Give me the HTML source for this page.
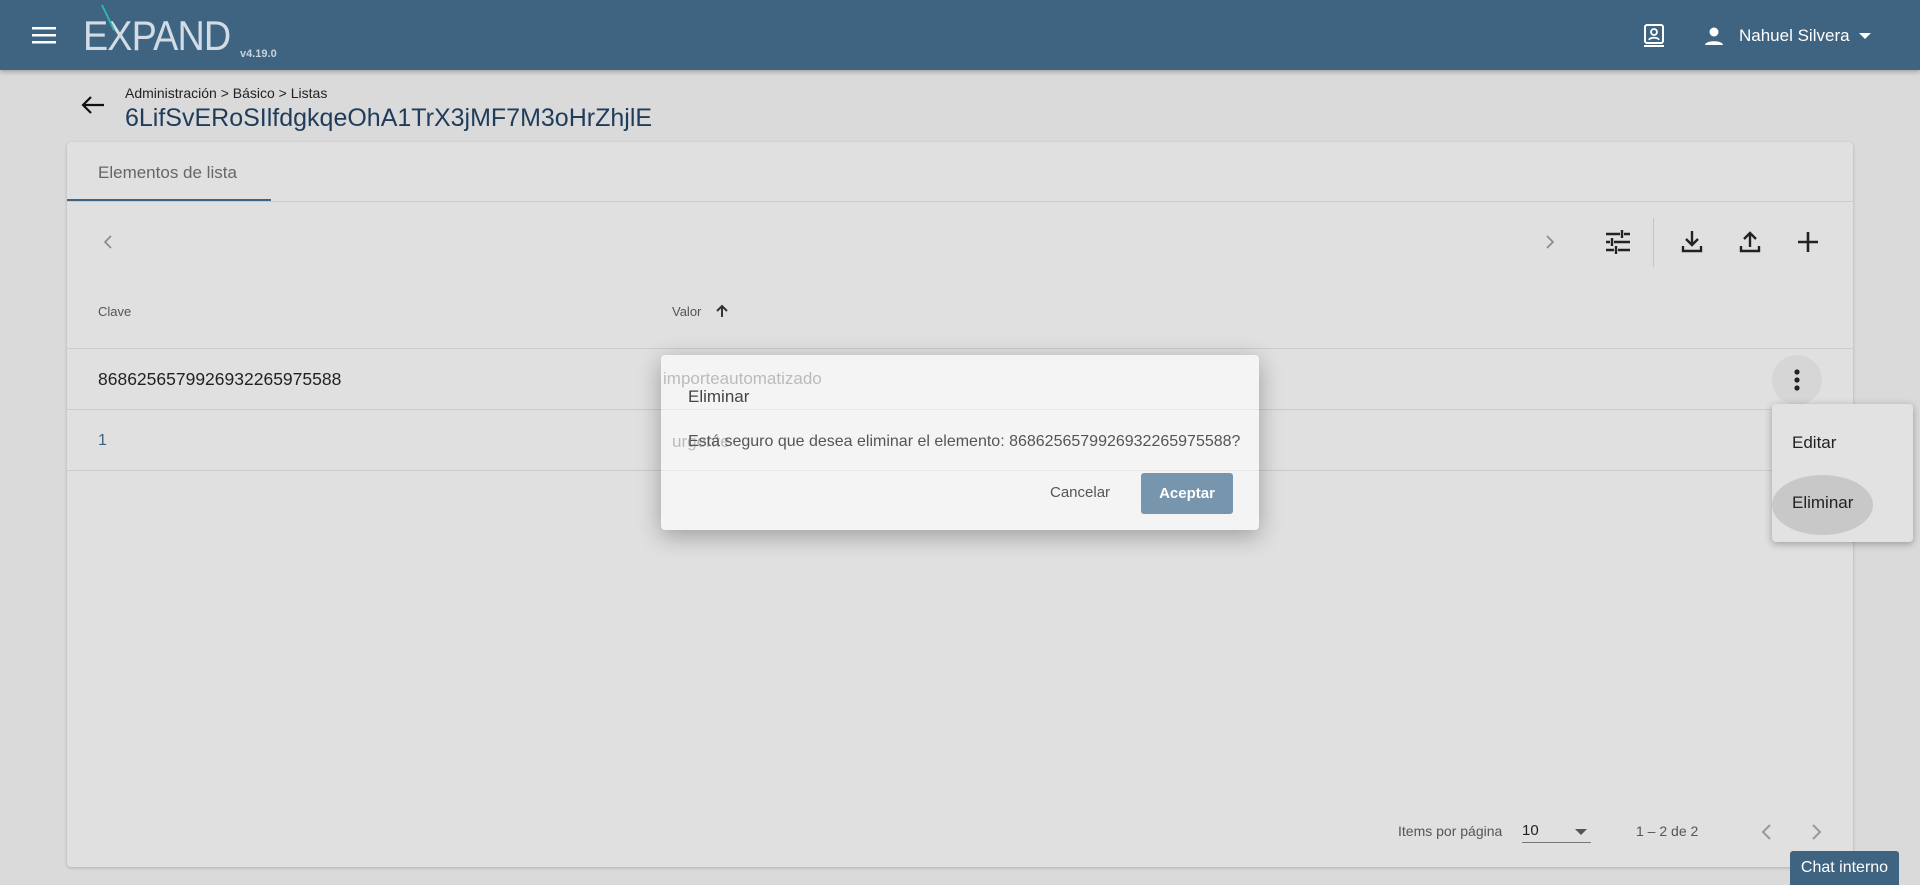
<!DOCTYPE html>
<html><head><meta charset="utf-8"><style>
*{margin:0;padding:0;box-sizing:border-box}
body{width:1920px;height:885px;overflow:hidden;background:#dadada;font-family:"Liberation Sans",sans-serif;position:relative}
.a{position:absolute}
.hdr{left:0;top:0;width:1920px;height:70px;background:#3e6481;box-shadow:0 2px 4px rgba(0,0,0,.25)}
.card{left:67px;top:142px;width:1786px;height:725px;background:#e0e0e0;border-radius:4px;box-shadow:0 1px 3px rgba(0,0,0,.2)}
.line{height:1px;background:#cbcbcb}
.t{white-space:nowrap}
</style></head><body>
<div class="a hdr">
 <svg class="a" style="left:32px;top:26px" width="24" height="18"><rect y="1" width="24" height="2.5" fill="#fff"/><rect y="8" width="24" height="2.5" fill="#fff"/><rect y="15" width="24" height="2.5" fill="#fff"/></svg>
 <div class="a t" style="left:83px;top:12px;font-size:42px;color:#d3dce4;letter-spacing:-1px;transform:scaleX(.9);transform-origin:0 0">EXPAND</div>
 <svg class="a" style="left:100px;top:4px" width="20" height="30"><line x1="2" y1="1" x2="14" y2="26" stroke="#2fb3b3" stroke-width="2"/></svg>
 <div class="a t" style="left:240px;top:48px;font-size:11px;color:#c9d3dc;font-weight:bold">v4.19.0</div>
 <svg class="a" style="left:1642px;top:22px" width="24" height="26" viewBox="0 0 24 26"><rect x="3" y="3" width="18" height="18" rx="2" fill="none" stroke="#fff" stroke-width="2"/><circle cx="12" cy="10" r="3" fill="none" stroke="#fff" stroke-width="1.8"/><path d="M7 18c1-3 9-3 10 0" fill="none" stroke="#fff" stroke-width="1.8"/><rect x="2" y="23" width="20" height="2" fill="#fff"/></svg>
 <svg class="a" style="left:1702px;top:24px" width="24" height="24" viewBox="0 0 24 24"><circle cx="12" cy="8" r="4.5" fill="#fff"/><path d="M3 21c0-5 18-5 18 0z" fill="#fff"/></svg>
 <div class="a t" style="left:1739px;top:26px;font-size:17px;color:#fff">Nahuel Silvera</div>
 <svg class="a" style="left:1859px;top:33px" width="12" height="7"><path d="M0 0h12L6 6z" fill="#fff"/></svg>
</div>
<svg class="a" style="left:80px;top:94px" width="26" height="22" viewBox="0 0 26 22"><path d="M24 11H3M11 3l-8 8 8 8" fill="none" stroke="#111" stroke-width="2.2"/></svg>
<div class="a t" style="left:125px;top:85px;font-size:14px;color:#222">Administración &gt; Básico &gt; Listas</div>
<div class="a t" style="left:125px;top:104px;font-size:25px;color:#1f3c5a">6LifSvERoSIlfdgkqeOhA1TrX3jMF7M3oHrZhjlE</div>
<div class="a card">
 <div class="a t" style="left:31px;top:21px;font-size:17px;color:#666">Elementos de lista</div>
 <div class="a" style="left:0;top:57px;width:204px;height:2px;background:#3e6481"></div>
 <div class="a line" style="left:0;top:59px;width:1786px"></div>
 <svg class="a" style="left:36px;top:92px" width="10" height="16"><path d="M8 2L2 8l6 6" fill="none" stroke="#888" stroke-width="1.6"/></svg>
 <svg class="a" style="left:1478px;top:92px" width="10" height="16"><path d="M2 2l6 6-6 6" fill="none" stroke="#888" stroke-width="1.6"/></svg>
 <svg class="a" style="left:1538px;top:88px" width="26" height="24" viewBox="0 0 26 24"><path d="M1 4h14M19 4h6M17 0v8M1 12h4M9 12h16M7 8v8M1 20h8M13 20h12M11 16v8" stroke="#222" stroke-width="2.4" fill="none"/></svg>
 <div class="a" style="left:1586px;top:76px;width:1px;height:49px;background:#c4c4c4"></div>
 <svg class="a" style="left:1614px;top:88px" width="22" height="24" viewBox="0 0 22 24"><path d="M11 1v14M5 9l6 6 6-6M2 16v5h18v-5" fill="none" stroke="#222" stroke-width="2.4"/></svg>
 <svg class="a" style="left:1672px;top:88px" width="22" height="24" viewBox="0 0 22 24"><path d="M11 17V3M5 9l6-6 6 6M2 16v5h18v-5" fill="none" stroke="#222" stroke-width="2.4"/></svg>
 <svg class="a" style="left:1730px;top:89px" width="22" height="22"><path d="M11 1v20M1 11h20" stroke="#222" stroke-width="2.6"/></svg>
 <div class="a t" style="left:31px;top:162px;font-size:13px;color:#555">Clave</div>
 <div class="a t" style="left:605px;top:162px;font-size:13px;color:#555">Valor</div>
 <svg class="a" style="left:649px;top:162px" width="12" height="14"><path d="M6 13V2M1 7l5-5 5 5" fill="none" stroke="#333" stroke-width="2"/></svg>
 <div class="a line" style="left:0;top:206px;width:1786px"></div>
 <div class="a t" style="left:31px;top:227px;font-size:17.5px;color:#222">8686256579926932265975588</div>
 <div class="a line" style="left:0;top:267px;width:1786px"></div>
 <div class="a t" style="left:31px;top:290px;font-size:16px;color:#3e6481">1</div>
 <div class="a line" style="left:0;top:328px;width:1786px"></div>
 <div class="a" style="left:1705px;top:213px;width:50px;height:50px;border-radius:50%;background:#d6d6d6"></div>
 <svg class="a" style="left:1725px;top:226px" width="10" height="24"><circle cx="5" cy="4" r="2.6" fill="#222"/><circle cx="5" cy="12" r="2.6" fill="#222"/><circle cx="5" cy="20" r="2.6" fill="#222"/></svg>
 <div class="a t" style="left:1331px;top:681px;font-size:14px;color:#555">Items por página</div>
 <div class="a t" style="left:1455px;top:680px;font-size:15px;color:#222">10</div>
 <svg class="a" style="left:1508px;top:687px" width="12" height="7"><path d="M0 0h12L6 6z" fill="#555"/></svg>
 <div class="a" style="left:1455px;top:700px;width:69px;height:1px;background:#777"></div>
 <div class="a t" style="left:1569px;top:681px;font-size:14px;color:#555">1 – 2 de 2</div>
 <svg class="a" style="left:1693px;top:681px" width="12" height="18"><path d="M10 2L3 9l7 7" fill="none" stroke="#999" stroke-width="2"/></svg>
 <svg class="a" style="left:1744px;top:681px" width="12" height="18"><path d="M2 2l7 7-7 7" fill="none" stroke="#999" stroke-width="2"/></svg>
</div>
<div class="a" style="left:1772px;top:404px;width:141px;height:138px;background:#e2e2e2;border-radius:4px;box-shadow:0 2px 8px rgba(0,0,0,.3);overflow:hidden">
 <div class="a" style="left:0;top:71px;width:101px;height:60px;border-radius:50%/50%;background:#c8c8c8"></div>
 <div class="a t" style="left:20px;top:29px;font-size:17px;color:#222">Editar</div>
 <div class="a t" style="left:20px;top:89px;font-size:17px;color:#222">Eliminar</div>
</div>
<div class="a" style="left:661px;top:355px;width:598px;height:175px;background:#f4f4f4;border-radius:4px;box-shadow:0 6px 24px rgba(0,0,0,.3)">
 <div class="a t" style="left:2px;top:14px;font-size:17px;color:#bbb">importeautomatizado</div>
 <div class="a t" style="left:27px;top:32px;font-size:17px;color:#444">Eliminar</div>
 <div class="a" style="left:0;top:54px;width:598px;height:1px;background:#e6e6e6"></div>
 <div class="a t" style="left:11px;top:77px;font-size:17px;color:#bbb">urgente</div>
 <div class="a t" style="left:27px;top:78px;font-size:16px;color:#555">Está seguro que desea eliminar el elemento: 8686256579926932265975588?</div>
 <div class="a" style="left:0;top:115px;width:598px;height:1px;background:#e6e6e6"></div>
 <div class="a t" style="left:389px;top:129px;font-size:15px;color:#555">Cancelar</div>
 <div class="a" style="left:480px;top:118px;width:92px;height:41px;border-radius:3px;background:#7796ad;color:#fff;font-size:15px;font-weight:bold;text-align:center;line-height:41px">Aceptar</div>
</div>
<div class="a t" style="left:1790px;top:851px;width:109px;height:34px;background:#3e6481;color:#fff;font-size:16px;text-align:center;line-height:34px;border-radius:3px 3px 0 0">Chat interno</div>
</body></html>
